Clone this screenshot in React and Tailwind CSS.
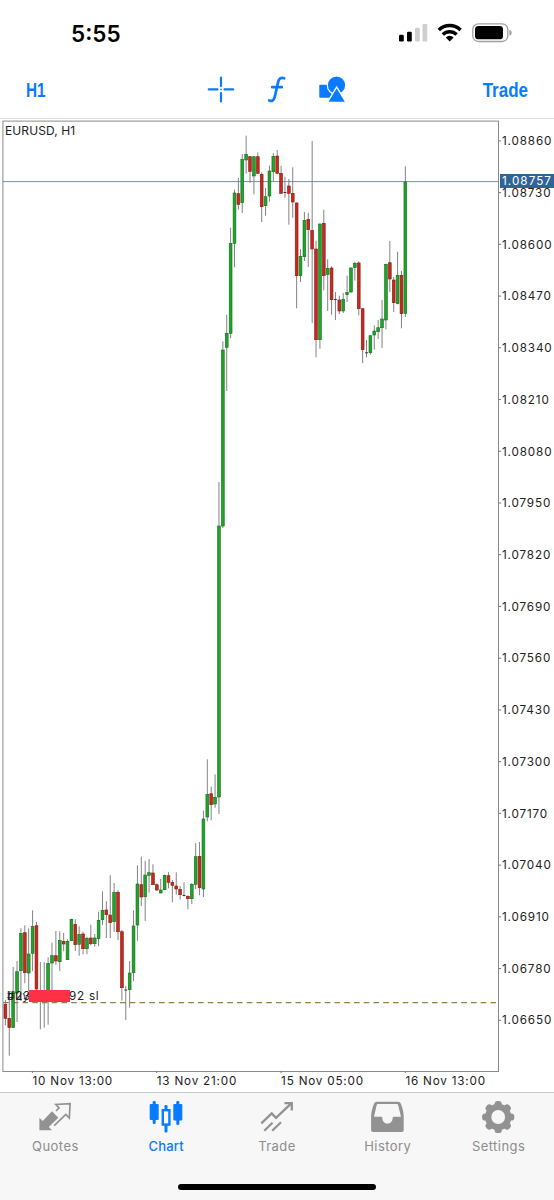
import { clsx } from 'clsx'

// [high, top, bottom, low, direction] — 'g' up, 'r' down, 'd' flat
const CANDLES = [
  [1000, 1004.3, 1018.3, 1025.3, 'r'], [998, 1018.3, 1027.7, 1055.7, 'r'],
  [967, 991.7, 1027.7, 1027.7, 'g'], [961, 971.7, 993, 1022, 'g'],
  [928.3, 933.3, 970.7, 1001, 'g'], [925.3, 932.7, 972.7, 983.3, 'r'],
  [928.3, 954, 973, 991, 'g'], [910.3, 926.3, 953.3, 971, 'g'],
  [922, 925.7, 989, 993, 'r'], [962, 994, 995, 1029.3, 'd'],
  [962, 994, 995, 1027.7, 'd'], [957.3, 963.3, 994, 1024.7, 'g'],
  [942.7, 955.7, 963, 990, 'g'], [931, 955.7, 961, 964.7, 'r'],
  [931.3, 940.3, 961.7, 971, 'g'], [933, 941.3, 944, 951.3, 'r'],
  [939.3, 941.3, 959.7, 960, 'g'], [918.7, 919.3, 940.7, 941, 'g'],
  [919.3, 924.3, 944.7, 951, 'r'], [926.3, 934.3, 944.3, 955.7, 'g'],
  [931.7, 934, 948.7, 954.3, 'r'], [936.7, 938.3, 948.7, 954.3, 'g'],
  [924.7, 938, 943.7, 945.3, 'r'], [934, 938, 943.7, 946.7, 'g'],
  [911.7, 920.3, 938.7, 946, 'g'], [891.3, 910.3, 919.7, 925, 'g'],
  [901.3, 910, 914.7, 938, 'r'], [875.3, 915, 922.7, 938, 'r'],
  [883, 892.3, 921.7, 932, 'g'], [890, 892.3, 931.7, 940, 'r'],
  [930, 931.7, 987.7, 1000.7, 'r'], [986, 989.5, 990.5, 1020, 'd'],
  [961, 973, 989.7, 1007.7, 'g'], [910.3, 926, 972.7, 981, 'g'],
  [865.3, 884, 925, 940.7, 'g'], [856.7, 884.7, 897, 906, 'r'],
  [860.7, 875, 896.7, 921, 'g'], [859, 872.7, 875.3, 892.7, 'g'],
  [864.3, 873, 884.7, 885, 'r'], [883.3, 884.7, 890, 891, 'r'],
  [879, 890, 893, 893.3, 'g'], [874.7, 875.3, 889.7, 890, 'g'],
  [872.3, 875.7, 882.3, 888.3, 'r'], [880, 882.3, 885.3, 902.3, 'r'],
  [872.3, 886, 889, 894.3, 'r'], [886, 889.3, 894.7, 899.7, 'r'],
  [882.3, 895, 896, 896.3, 'd'], [895.3, 896.3, 898.7, 909.3, 'r'],
  [883, 884.3, 898.7, 904, 'g'], [843.3, 856.7, 884.3, 889, 'g'],
  [842, 856.3, 887.7, 895.3, 'r'], [810.7, 819, 889, 897, 'g'],
  [759.3, 794.3, 817, 821.3, 'g'], [786.7, 793.7, 804.7, 820.3, 'r'],
  [774.3, 797.3, 804, 807.7, 'g'], [482, 526, 797, 814, 'g'],
  [341.3, 350, 526, 528, 'g'], [314.7, 333.3, 347.3, 391, 'g'],
  [227.7, 243.3, 333.3, 338, 'g'], [189.7, 193, 243.3, 267.3, 'g'],
  [178, 193.7, 204.3, 209.7, 'r'], [154, 159.3, 202.7, 213, 'g'],
  [135.7, 154.3, 160, 173.7, 'g'], [156, 156.7, 171.3, 182.7, 'r'],
  [156, 156.7, 176, 194.3, 'g'], [152.3, 156.7, 173.3, 174, 'r'],
  [172.3, 174.3, 206.7, 222, 'r'], [188, 196.7, 205.7, 215.7, 'g'],
  [165.7, 171, 196, 201.7, 'g'], [153, 156.3, 171.7, 181.3, 'g'],
  [150, 156, 173.3, 174, 'r'], [165.7, 173.3, 193.3, 194, 'r'],
  [176.7, 192, 193, 197.7, 'd'], [179, 186, 193.3, 224.7, 'r'],
  [167.3, 193.3, 202, 217.7, 'r'], [202.3, 203, 275.7, 308.3, 'r'],
  [249, 256.3, 275.7, 282, 'g'], [212, 220.3, 256.7, 261, 'g'],
  [212.7, 219.3, 229.7, 267, 'r'], [141, 230.3, 249, 323, 'r'],
  [240.7, 249, 339.7, 357.3, 'r'], [223.7, 224, 339.7, 348.7, 'g'],
  [209.7, 223.3, 275.7, 290.3, 'r'], [259.3, 268.3, 274.7, 311, 'g'],
  [266.3, 268, 299.7, 314.7, 'r'], [292, 299, 300, 320, 'd'],
  [295.7, 300, 311, 314, 'r'], [293, 299.3, 311, 313, 'g'],
  [275.7, 292.3, 294.7, 302, 'g'], [267.3, 268, 292, 292.7, 'g'],
  [262, 263.3, 267.7, 280.7, 'g'], [261.3, 263, 308.7, 315.3, 'r'],
  [308, 308.7, 349.7, 363, 'r'], [340, 352.3, 353.3, 357.3, 'd'],
  [335, 335.7, 352.7, 354.7, 'g'], [325.3, 331, 335, 349.7, 'g'],
  [320, 327.7, 331.7, 339, 'g'], [300, 319, 327.7, 348, 'g'],
  [263.7, 264.3, 320, 329.3, 'g'], [241, 262.7, 279, 292, 'r'],
  [277, 280, 302.7, 312, 'r'], [251.7, 275.3, 303.7, 304.3, 'g'],
  [271, 275.3, 313.7, 328.3, 'r'], [166.3, 182, 313.3, 317, 'g'],
]

const FILL = { g: '#1fa32a', r: '#c4291d', d: '#333333' }
const EDGE = { g: '#146f1c', r: '#8a1a12', d: '#333333' }

const PRICES = [
  '1.08860', '1.08730', '1.08600', '1.08470', '1.08340', '1.08210',
  '1.08080', '1.07950', '1.07820', '1.07690', '1.07560', '1.07430',
  '1.07300', '1.07170', '1.07040', '1.06910', '1.06780', '1.06650',
]

const TIMES = ['10 Nov 13:00', '13 Nov 21:00', '15 Nov 05:00', '16 Nov 13:00']

function StatusBar() {
  return (
    <div className="flex h-[60px] shrink-0 items-start justify-between pl-[71px] pr-[42px]">
      <span className="mt-[18px] text-[22.5px] leading-8 font-semibold text-black">5:55</span>
      <svg className="mt-[22px] h-[22px] w-[114px]" viewBox="398 22 114 22">
        <g>
          <rect x="399" y="34.7" width="4.8" height="6.8" rx="1.2" />
          <rect x="407" y="31.7" width="4.8" height="9.8" rx="1.2" />
          <rect x="415" y="27.8" width="4.8" height="13.7" rx="1.2" fill="#cfcfcf" />
          <rect x="422.5" y="24" width="4.8" height="17.5" rx="1.2" fill="#cfcfcf" />
        </g>
        <g fill="none" stroke="#000" strokeWidth="3.5">
          <path d="M438.8 30a15.6 15.6 0 0 1 21.8 0" />
          <path d="M442.8 34.6a9.8 9.8 0 0 1 13.8 0" />
        </g>
        <path d="M449.7 41.4l-3.9-4a5.6 5.6 0 0 1 7.8 0z" />
        <rect x="472.8" y="23.9" width="35" height="17.6" rx="5.6" fill="none" stroke="#a0a0a0" strokeWidth="1.3" />
        <rect x="475" y="26.1" width="28" height="13.2" rx="3.4" />
        <path d="M509.4 29.8c1.7.6 2.3 1.6 2.3 2.9s-.6 2.3-2.3 2.9z" fill="#a0a0a0" />
      </svg>
    </div>
  )
}

function Toolbar() {
  return (
    <div className="flex h-[59px] shrink-0 items-center justify-between border-b border-[#dcdcdc] pr-[26px] pl-[26px] font-['Liberation_Sans',sans-serif] text-[21px] font-bold text-[#087bff]">
      <div className="w-[46px] pt-[2px]">
        <span className="inline-block origin-left scale-x-[0.73]">H1</span>
      </div>
      <svg className="h-[30px] w-[142px]" viewBox="206 74 142 30">
        <g stroke="#087bff" strokeWidth="2.2" strokeLinecap="round">
          <path d="M208.8 89.4h8.7M224.5 89.4h8.7M221 77.6v8.4M221 93v8.4" />
          <path d="M221 89.4h.01" strokeWidth="1.6" />
        </g>
        <path
          d="M284.2 78.3c-3.4-1.2-5.2.3-6.1 3.8l-3.3 14.6c-.8 3.4-2.6 5-5.6 3.8M272.2 87.2h9.6"
          fill="none" stroke="#087bff" strokeWidth="2.7" strokeLinecap="round"
        />
        <g fill="#087bff">
          <rect x="319.3" y="84.7" width="14" height="13" rx=".8" />
          <circle cx="336.5" cy="85.2" r="9.2" stroke="#fff" strokeWidth="1.2" />
          <path d="M336.7 87l9.3 15.4h-18.6z" stroke="#fff" strokeWidth="1.4" />
        </g>
      </svg>
      <div className="flex w-[46px] justify-end pt-[2px]">
        <span className="inline-block origin-right scale-x-[0.81]">Trade</span>
      </div>
    </div>
  )
}

function Candle({ index, data }) {
  const [high, top, bottom, low, kind] = data
  const x = 5.4 + index * 3.883
  return (
    <g>
      <path d={`M${x} ${high}V${low}`} stroke="#757575" strokeWidth="0.9" />
      <rect
        x={x - 1.4}
        y={top}
        width="2.8"
        height={Math.max(bottom - top, 0.6)}
        fill={FILL[kind]}
        stroke={EDGE[kind]}
        strokeWidth={kind === 'd' ? 0 : 0.6}
      />
    </g>
  )
}

function Plot() {
  return (
    <svg className="block h-[954px] w-[502px]" viewBox="0 119 502 954">
      <rect x="2.9" y="121.1" width="495.6" height="950.4" fill="none" stroke="#8b8b8b" />
      <path d="M3 181.6H498" stroke="#5f86ab" strokeWidth="0.9" />
      <path d="M3 1002.6H496" stroke="#97803f" strokeWidth="1.3" strokeDasharray="5.6 4.15" />
      {CANDLES.map((c, i) => <Candle key={i} index={i} data={c} />)}
      {/* axis ticks */}
      {PRICES.map((p, i) => (
        <path key={p} d={`M498.5 ${140.9 + i * 51.73}h2.6`} stroke="#777" />
      ))}
      {TIMES.map((t, i) => (
        <path key={t} d={`M${32.4 + i * 124.3} 1071v2`} stroke="#777" />
      ))}
    </svg>
  )
}

function Chart() {
  return (
    <div className="relative h-[973px] shrink-0 text-[11.7px] leading-4 text-[#222]">
      <div className="flex">
        <Plot />
        <div className="-mt-[3.6px] flex h-[954px] flex-col tracking-[0.85px]">
          {PRICES.map(p => (
            <div key={p} className="flex h-[51.73px] shrink-0 items-center">{p}</div>
          ))}
        </div>
      </div>
      <div className="flex pl-[32.5px] tracking-[0.8px]">
        {TIMES.map(t => (
          <span key={t} className="w-[124.3px] shrink-0 whitespace-nowrap">{t}</span>
        ))}
      </div>

      {/* symbol caption */}
      <span className="absolute top-[4px] left-[5px] text-xs tracking-[0.1px]">EURUSD, H1</span>

      {/* current price */}
      <span className="absolute top-[55px] left-[500px] h-[14px] w-[54px] bg-[#2f6499] pl-[2px] leading-[15px] tracking-[1.05px] text-white">
        1.08757
      </span>

      {/* stop loss label, partly masked */}
      <span className="absolute top-[869px] left-[7px] tracking-[0.75px]">#23</span>
      <span className="absolute top-[869px] left-[7px] tracking-[0.75px]">buy</span>
      <span className="absolute top-[871px] left-[29px] h-3 w-[41px] bg-[#ff3147]" />
      <span className="absolute top-[869px] left-[69px] tracking-[0.75px]">92 sl</span>
    </div>
  )
}

function QuotesIcon() {
  return (
    <svg className="h-9 w-9" viewBox="37 1099 36 36">
      <path d="M39.4 1130.3v-12.6l3.3 3.2 9.3-9.6 6.3 6.4-9.5 9.3 3.2 3.3z" fill="#929292" />
      <path
        d="M56 1110.8l3-2.8-3.2-3.6 14.3-.7-.8 14.3-3.5-3.6-11.6 11.2"
        fill="none" stroke="#929292" strokeWidth="1.7"
      />
    </svg>
  )
}

function ChartIcon() {
  return (
    <svg className="h-9 w-9" viewBox="148 1099 36 36" fill="#087bff">
      <rect x="149.7" y="1104" width="9" height="16" rx="1" />
      <rect x="152.7" y="1101" width="3" height="23" rx="1.2" />
      <rect x="173.3" y="1104" width="9" height="16.4" rx="1" />
      <rect x="176.3" y="1101" width="3" height="24" rx="1.2" />
      <rect x="164.5" y="1105" width="3" height="5" rx="1.2" />
      <rect x="164.5" y="1125" width="3" height="7.5" rx="1.2" />
      <rect x="162.8" y="1110.2" width="6.6" height="14.4" fill="none" stroke="#087bff" strokeWidth="2.4" />
    </svg>
  )
}

function TradeIcon() {
  return (
    <svg className="h-9 w-9" viewBox="259 1099 36 36" fill="none" stroke="#929292" strokeWidth="2.3">
      <path d="M261.3 1123.3l10.4-9.9 4.3 4.5 15-14.3M284.5 1103.2h7.3v7.3" />
      <path d="M264.3 1130.7l8.2-8M272.2 1130.8l8.8-8.6" />
    </svg>
  )
}

function HistoryIcon() {
  return (
    <svg className="h-9 w-9" viewBox="370 1099 36 36">
      <path
        d="M377 1101.7h21c1.5 0 2.4.8 2.9 2.1 1.7 4.3 2.8 8.5 2.8 13.2v13c0 1.3-.7 2-2 2h-28.6c-1.3 0-2-.7-2-2v-13c0-4.7 1.2-8.9 2.9-13.2.5-1.3 1.5-2.1 3-2.1z"
        fill="#929292"
      />
      <path
        d="M378.3 1104h18.2c.9 0 1.4.4 1.7 1.2l2.8 11.5h-7c-1 0-1.4.6-1.4 1.6 0 3.1-2.2 5.3-5.1 5.3s-5.1-2.2-5.1-5.3c0-1-.4-1.6-1.4-1.6h-7l2.6-11.5c.3-.8.8-1.2 1.7-1.2z"
        fill="#f7f7f7"
      />
    </svg>
  )
}

function SettingsIcon() {
  return (
    <svg className="h-9 w-9" viewBox="-17.2 -18 36 36" fill="#929292">
      {[0, 45, 90, 135].map(a => (
        <rect key={a} x="-3.6" y="-16.1" width="7.2" height="32.2" rx="3.2" transform={`rotate(${a})`} />
      ))}
      <circle r="13.2" />
      <circle r="6.9" fill="#f7f7f7" />
    </svg>
  )
}

const TABS = [
  { label: 'Quotes',   icon: QuotesIcon },
  { label: 'Chart',    icon: ChartIcon, active: true },
  { label: 'Trade',    icon: TradeIcon },
  { label: 'History',  icon: HistoryIcon },
  { label: 'Settings', icon: SettingsIcon },
]

function TabBar() {
  return (
    <div className="flex h-[108px] shrink-0 flex-col border-t border-[#c9c9c9] bg-[#f7f7f7]">
      <div className="flex pt-[6px]">
        {TABS.map(({ label, icon: Icon, active }) => (
          <div
            key={label}
            className={clsx(
              'flex flex-1 flex-col items-center text-[13px] leading-5',
              active
                ? 'font-medium tracking-[0.2px] text-[#087bff]'
                : 'tracking-[0.45px] text-[#8c8c8c]',
            )}
          >
            <Icon />
            <span className="mt-[1px]">{label}</span>
          </div>
        ))}
      </div>
      <div className="mx-auto mt-[27.5px] h-[6px] w-[198px] rounded-full bg-black" />
    </div>
  )
}

export default function App() {
  return (
    <div className="flex h-[1200px] w-[554px] flex-col overflow-hidden bg-white font-['Inter','Liberation_Sans',sans-serif]">
      <StatusBar />
      <Toolbar />
      <Chart />
      <TabBar />
    </div>
  )
}
